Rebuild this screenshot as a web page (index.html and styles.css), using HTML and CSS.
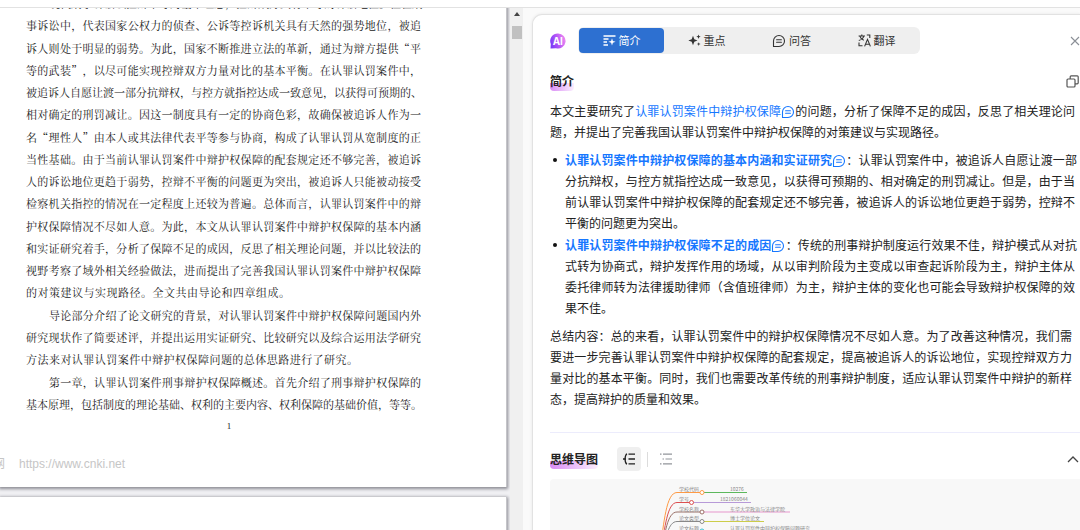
FILE: index.html
```html
<!DOCTYPE html>
<html lang="zh-CN">
<head>
<meta charset="utf-8">
<title>AI 阅读助手</title>
<link rel="stylesheet" href="styles.css">
</head>
<body>
<svg class="defs" aria-hidden="true">
  <symbol id="chat" viewBox="0 0 14 14"><path d="M1.5 12.5V7A5.5 5.5 0 1 1 7 12.5ZM4.6 5.7h4.8M4.6 8.3h4.8" fill="none" stroke="currentColor" stroke-width="1.1" stroke-linejoin="round" stroke-linecap="round"/></symbol>
</svg>
<header class="topbar"></header>
<main class="workspace">
  <section class="viewer">
    <div class="pages">
      <article class="paper">
        <div class="lines">
          <span class="line indent">现代刑事诉讼以控辩平等为基本理念，控辩双方具有平等的诉讼地位。但在刑</span>
          <span class="line">事诉讼中，代表国家公权力的侦查、公诉等控诉机关具有天然的强势地位，被追</span>
          <span class="line">诉人则处于明显的弱势。为此，国家不断推进立法的革新，通过为辩方提供“平</span>
          <span class="line">等的武装”，以尽可能实现控辩双方力量对比的基本平衡。在认罪认罚案件中，</span>
          <span class="line">被追诉人自愿让渡一部分抗辩权，与控方就指控达成一致意见，以获得可预期的、</span>
          <span class="line">相对确定的刑罚减让。因这一制度具有一定的协商色彩，故确保被追诉人作为一</span>
          <span class="line">名“理性人”由本人或其法律代表平等参与协商，构成了认罪认罚从宽制度的正</span>
          <span class="line">当性基础。由于当前认罪认罚案件中辩护权保障的配套规定还不够完善，被追诉</span>
          <span class="line">人的诉讼地位更趋于弱势，控辩不平衡的问题更为突出，被追诉人只能被动接受</span>
          <span class="line">检察机关指控的情况在一定程度上还较为普遍。总体而言，认罪认罚案件中的辩</span>
          <span class="line">护权保障情况不尽如人意。为此，本文从认罪认罚案件中辩护权保障的基本内涵</span>
          <span class="line">和实证研究着手，分析了保障不足的成因，反思了相关理论问题，并以比较法的</span>
          <span class="line">视野考察了域外相关经验做法，进而提出了完善我国认罪认罚案件中辩护权保障</span>
          <span class="line two-thirds">的对策建议与实现路径。全文共由导论和四章组成。</span>
          <span class="line indent">导论部分介绍了论文研究的背景，对认罪认罚案件中辩护权保障问题国内外</span>
          <span class="line">研究现状作了简要述评，并提出运用实证研究、比较研究以及综合运用法学研究</span>
          <span class="line most">方法来对认罪认罚案件中辩护权保障问题的总体思路进行了研究。</span>
          <span class="line indent">第一章，认罪认罚案件刑事辩护权保障概述。首先介绍了刑事辩护权保障的</span>
          <span class="line">基本原理，包括制度的理论基础、权利的主要内容、权利保障的基础价值，等等。</span>
        </div>
        <div class="folio">1</div>
        <footer class="watermark"><span>网</span><span>https://www.cnki.net</span></footer>
      </article>
      <article class="paper next"></article>
    </div>
    <div class="scrollbar">
      <svg width="6" height="4" viewBox="0 0 6 4"><path d="M0 4 3 0l3 4z" fill="#444"/></svg>
      <div class="thumb"></div>
    </div>
  </section>
  <aside class="panel">
    <div class="card">
      <div class="toolbar">
        <svg class="logo" width="16" height="16" viewBox="0 0 16 16">
          <defs><linearGradient id="lg" x1="0" y1="0.6" x2="1" y2="0.3"><stop offset="0" stop-color="#7a3af8"/><stop offset="0.5" stop-color="#b858f6"/><stop offset="1" stop-color="#f08cf0"/></linearGradient></defs>
          <path d="M8 .5a7.500 7.500 0 1 1-2 14.700L.5 15.600.8 11A7.500 7.500 0 0 1 8 .5z" fill="url(#lg)"/>
          <text x="8" y="11.500" text-anchor="middle" class="logo-text">AI</text>
        </svg>
        <nav class="tabs">
          <button class="tab active" type="button">
            <svg width="13" height="13" viewBox="0 0 13 13" fill="none" stroke="currentColor" stroke-width="1.300"><path d="M.5 2h12M.5 5h5M.5 8h3.500M.5 11h4.500"/><path d="M9 4.200l.9 2.700 2.700.9-2.700.9L9 11.400l-.9-2.700-2.700-.9 2.700-.9z" fill="currentColor" stroke="none"/></svg>简介</button>
          <button class="tab" type="button">
            <svg width="13" height="13" viewBox="0 0 13 13" fill="currentColor"><path d="M5 1.800l1.300 3.400L9.500 6.500 6.300 7.800 5 11.200 3.700 7.800.3 6.500l3.400-1.300zM10.500.5l.6 1.600 1.600.6-1.600.6-.6 1.600-.6-1.600-1.600-.6 1.600-.6zM10.700 8.200l.5 1.400 1.400.5-1.400.5-.5 1.400-.5-1.400-1.400-.5 1.400-.5z"/></svg>重点</button>
          <button class="tab" type="button"><svg width="14" height="14"><use href="#chat"/></svg>问答</button>
          <button class="tab" type="button">
            <svg width="13" height="13" viewBox="0 0 13 13" fill="none" stroke="currentColor" stroke-width="1.100"><path d="M.6 2h6.400M3.800.4V2M5.800 2C5.300 4.200 3.500 5.700.8 6.500M1.800 2.200c.6 2 2 3.300 4 4M6.600 12.400l2.900-7 2.900 7M7.500 10.200h4M8.800 1h3v3M1 8.500v3.300h3.500"/></svg>翻译</button>
        </nav>
        <button class="icon-btn close" type="button" aria-label="关闭"><svg width="10" height="10" viewBox="0 0 10 10"><path d="M1 1l8 8M9 1L1 9" stroke="#8b8f96" stroke-width="1.100"/></svg></button>
      </div>
      <div class="heading">
        <h2 class="title">简介</h2>
        <button class="icon-btn" type="button" aria-label="复制"><svg width="13" height="13" viewBox="0 0 13 13" fill="none" stroke="#555" stroke-width="1.200"><rect x="1" y="4" width="8" height="8" rx="1"/><path d="M4.200 4V1.800a1 1 0 0 1 1-1h6a1 1 0 0 1 1 1v6a1 1 0 0 1-1 1H9"/></svg></button>
      </div>
      <div class="summary">
        <p>
          <span class="row">本文主要研究了<a href="#s0">认罪认罚案件中辩护权保障<svg class="ref"><use href="#chat"/></svg></a>的问题，分析了保障不足的成因，反思了相关理论问</span>
          <span class="row last">题，并提出了完善我国认罪认罚案件中辩护权保障的对策建议与实现路径。</span>
        </p>
        <ul>
          <li>
            <span class="row wide"><a href="#s1"><b>认罪认罚案件中辩护权保障的基本内涵和实证研究</b><svg class="ref"><use href="#chat"/></svg></a>：认罪认罚案件中，被追诉人自愿让渡一部</span>
            <span class="row">分抗辩权，与控方就指控达成一致意见，以获得可预期的、相对确定的刑罚减让。但是，由于当</span>
            <span class="row">前认罪认罚案件中辩护权保障的配套规定还不够完善，被追诉人的诉讼地位更趋于弱势，控辩不</span>
            <span class="row last">平衡的问题更为突出。</span>
          </li>
          <li>
            <span class="row wide"><a href="#s2"><b>认罪认罚案件中辩护权保障不足的成因</b><svg class="ref"><use href="#chat"/></svg></a>：传统的刑事辩护制度运行效果不佳，辩护模式从对抗</span>
            <span class="row">式转为协商式，辩护发挥作用的场域，从以审判阶段为主变成以审查起诉阶段为主，辩护主体从</span>
            <span class="row">委托律师转为法律援助律师（含值班律师）为主，辩护主体的变化也可能会导致辩护权保障的效</span>
            <span class="row last">果不佳。</span>
          </li>
        </ul>
        <p>
          <span class="row narrow">总结内容：总的来看，认罪认罚案件中的辩护权保障情况不尽如人意。为了改善这种情况，我们需</span>
          <span class="row narrow">要进一步完善认罪认罚案件中辩护权保障的配套规定，提高被追诉人的诉讼地位，实现控辩双方力</span>
          <span class="row narrow">量对比的基本平衡。同时，我们也需要改革传统的刑事辩护制度，适应认罪认罚案件中辩护的新样</span>
          <span class="row last">态，提高辩护的质量和效果。</span>
        </p>
      </div>
      <div class="heading map-heading">
        <h2 class="title">思维导图</h2>
        <button class="mode active" type="button" aria-label="导图"><svg width="14" height="14" viewBox="0 0 14 14" fill="none" stroke="#222" stroke-width="1.300"><path d="M6.500 2.200H13M6.500 7H13M6.500 11.800H13M1 7h3M5 1.800C3.200 2.500 3.200 5 3 7c.2 2 .2 4.500 2 5.200"/></svg></button>
        <span class="divider"></span>
        <button class="mode" type="button" aria-label="大纲"><svg width="14" height="14" viewBox="0 0 14 14" fill="none" stroke="#92959b" stroke-width="1.200"><path d="M4 2.200h9M6.500 7H13M4 11.800h9M1 2.200h1.500M3.500 7H5M1 11.800h1.500"/></svg></button>
        <button class="icon-btn" type="button" aria-label="收起"><svg width="12" height="7" viewBox="0 0 12 7"><path d="M1 6l5-5 5 5" fill="none" stroke="#444" stroke-width="1.300"/></svg></button>
      </div>
      <div class="mindmap">
        <svg width="290" height="80" viewBox="0 0 290 80">
          <g fill="none" stroke-width="1">
            <path d="M110 70C114 45 116 13.500 127 13.500h23" stroke="#ff9a45"/>
            <path d="M111 70C115 50 117 23.500 127 23.500h13" stroke="#dc4f50"/>
            <path d="M112 70C115 56 117 33 127 33h23" stroke="#9a7068"/>
            <path d="M113 70C116 60 118 42.500 127 42.500h23" stroke="#888"/>
            <path d="M114 70C117 65 119 52 127 52h23" stroke="#35bfd0"/>
            <path d="M153 13.500h44" stroke="#5cb85c"/>
            <path d="M143 23.500h58" stroke="#b79ad8"/>
            <path d="M153 33h87" stroke="#e696cc"/>
            <path d="M153 42.500h61" stroke="#cccd4a"/>
            <path d="M153 52h112" stroke="#5aa0d0"/>
            <g fill="#fff"><circle cx="152" cy="13.500" r="2" stroke="#ff9a45"/><circle cx="141.500" cy="23.500" r="2" stroke="#dc4f50"/><circle cx="152" cy="33" r="2" stroke="#9a7068"/><circle cx="152" cy="42.500" r="2" stroke="#888"/><circle cx="152" cy="52" r="2" stroke="#35bfd0"/></g>
          </g>
          <g class="node">
            <text x="129" y="12">学校代码</text><text x="180" y="12">10276</text>
            <text x="129" y="22">学号</text><text x="170" y="22">1821060044</text>
            <text x="129" y="32">学校名称</text><text x="180" y="32">东华大学政治与法律学院</text>
            <text x="129" y="41">论文类型</text><text x="180" y="41">博士学位论文</text>
            <text x="129" y="51">论文标题</text><text x="180" y="51">认罪认罚案件中辩护权保障问题研究</text>
          </g>
        </svg>
      </div>
    </div>
  </aside>
</main>
</body>
</html>
```
FILE: styles.css
```css
* { box-sizing: border-box; }
body {
  margin: 0;
  height: 100vh;
  overflow: hidden;
  display: flex;
  flex-direction: column;
  background: #fff;
  color: #222;
  font: 12px/21px "Noto Sans CJK SC", sans-serif;
}
h2, p, ul { margin: 0; padding: 0; }
button { border: 0; padding: 0; background: none; color: inherit; font: inherit; cursor: pointer; }
svg { flex: none; }
.defs { position: absolute; width: 0; height: 0; }
.topbar { flex: none; height: 8px; border-bottom: 1px solid #e2e2e2; }
.workspace { flex: 1; min-height: 0; display: grid; grid-template-columns: 523px 1fr; }

.viewer { display: flex; min-height: 0; overflow: hidden; background: #f0f0f3; }
.pages { flex: 1; min-width: 0; display: flex; flex-direction: column; gap: 10px; padding-right: 3px; }
.paper {
  flex: none;
  margin-top: -40px;
  padding: 24px 85px 12px 26px;
  background: #fff;
  border-right: 1px solid #c4c4c8;
  box-shadow: 0 1px 3px 1px #8c8c94;
}
.paper.next { margin-top: 0; height: 600px; }
.lines {
  height: 423px;
  display: flex;
  flex-direction: column;
  justify-content: space-between;
  color: #222;
  font: 11px/22px "Noto Serif CJK SC", "Noto Sans CJK SC", serif;
  text-spacing-trim: space-all;
}
.line { display: block; white-space: nowrap; text-align: justify; text-align-last: justify; }
.line.indent { padding-left: 23px; }
.line.two-thirds { width: 264px; }
.line.most { width: 332px; }
.folio { padding-left: 11px; text-align: center; font: 9px/22px "Liberation Serif", serif; }
.watermark { display: flex; gap: 14px; margin: 16px 0 0 -33px; color: #c6c6c6; font: 12px/22px "Liberation Sans", "Noto Sans CJK SC", sans-serif; }
.scrollbar { width: 13px; display: flex; flex-direction: column; align-items: center; gap: 10px; padding-top: 4px; background: #f0f0f0; }
.thumb { width: 10px; height: 13px; background: #c1c1c1; }

.panel { min-width: 0; overflow: hidden; padding: 6px 0 0 9px; background: #fafafa; }
.card {
  min-height: 600px;
  padding: 12px 0 0 17px;
  background: #fff;
  border: 1px solid #e2e2e2;
  border-right: 0;
  border-radius: 10px 0 0 0;
  box-shadow: 0 0 3px #e4e4e4;
}
.toolbar { display: flex; align-items: center; }
.logo-text { fill: #fff; font: bold 10px "Open Sans", sans-serif; }
.tabs { display: flex; margin-left: 12px; padding: 1px; border-radius: 6px; background: #efefef; }
.tab { width: 85px; height: 25px; display: flex; align-items: center; justify-content: center; gap: 3px; border-radius: 4px; color: #333; font-size: 11px; }
.tab.active { background: #2d70d1; color: #fff; }
.icon-btn { display: flex; margin-left: auto; margin-right: 1px; }
.icon-btn.close { margin-right: 0; }
.heading { display: flex; align-items: center; margin-top: 17px; }
.title {
  font: bold 12px/20px "Noto Sans CJK SC", sans-serif;
  border-radius: 0 0 4px 4px;
  background: linear-gradient(90deg, #d98cf5, #fbeefe) left bottom / 100% 8px no-repeat;
}
.summary { margin-top: 9px; padding-bottom: 23px; border-bottom: 1px solid #ececfc; }
.summary ul { list-style: none; margin: 7px 0; padding-left: 15px; }
.summary li { position: relative; margin-bottom: 1px; }
.summary li::before { content: ""; position: absolute; left: -12px; top: 9px; width: 4px; height: 4px; border-radius: 50%; background: #111; }
.row { display: block; margin-right: 5px; white-space: nowrap; text-align: justify; text-align-last: justify; }
.row.wide { margin-right: 3px; }
.row.narrow { margin-right: 8px; }
.row.last { text-align-last: left; }
.summary a { color: #1677ff; text-decoration: none; }
.ref { width: 14px; height: 14px; vertical-align: -3px; }
.map-heading { margin-top: 14px; }
.mode { display: flex; align-items: center; justify-content: center; width: 24px; height: 24px; border-radius: 4px; }
.mode.active { margin-left: 19px; background: #efefef; }
.divider { width: 1px; height: 15px; margin: 0 6px; background: #dcdcdc; }
.mindmap { margin-top: 8px; border-radius: 4px 0 0 0; background: #f8f8f8; }
.mindmap svg { display: block; }
.node { fill: #888; font: 5px "Noto Sans CJK SC", sans-serif; }
```
